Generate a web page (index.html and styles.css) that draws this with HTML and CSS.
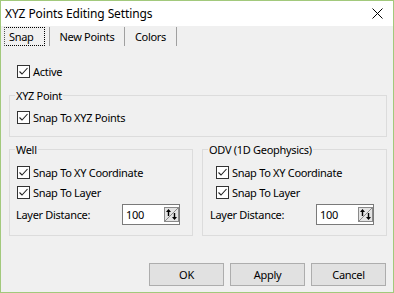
FILE: index.html
```html
<!DOCTYPE html>
<html lang="en">
<head>
    <meta charset="UTF-8">
    <title>XYZ Points Editing Settings</title>
    <link rel="stylesheet" href="styles.css">
</head>
<body>

<div class="window">
    <div class="titlebar">
        <span class="title">XYZ Points Editing Settings</span>
        <svg class="close" width="11" height="11" viewBox="0 0 11 11">
            <path d="M0.5 0.5 L10.5 10.5 M10.5 0.5 L0.5 10.5" stroke="#000" stroke-width="1" fill="none"/>
        </svg>
    </div>

    <div class="tabs">
        <div class="tab tab-snap"><span class="focus">Snap</span></div>
        <div class="tab tab-new">New Points</div>
        <div class="tab tab-colors">Colors</div>
    </div>

    <div class="panel">
        <label class="check active-row">
            <svg class="box" width="13" height="13" viewBox="0 0 13 13"><rect x="0.5" y="0.5" width="12" height="12" fill="#fff" stroke="#333"/><path d="M2.5 6.5 L5 9 L10.5 3" stroke="#222" stroke-width="1.1" fill="none"/></svg>
            Active
        </label>

        <fieldset class="group xyz">
            <legend>XYZ Point</legend>
            <label class="check">
                <svg class="box" width="13" height="13" viewBox="0 0 13 13"><rect x="0.5" y="0.5" width="12" height="12" fill="#fff" stroke="#333"/><path d="M2.5 6.5 L5 9 L10.5 3" stroke="#222" stroke-width="1.1" fill="none"/></svg>
                Snap To XYZ Points
            </label>
        </fieldset>

        <div class="group-row">
            <fieldset class="group well">
                <legend>Well</legend>
                <label class="check">
                    <svg class="box" width="13" height="13" viewBox="0 0 13 13"><rect x="0.5" y="0.5" width="12" height="12" fill="#fff" stroke="#333"/><path d="M2.5 6.5 L5 9 L10.5 3" stroke="#222" stroke-width="1.1" fill="none"/></svg>
                    Snap To XY Coordinate
                </label>
                <label class="check second">
                    <svg class="box" width="13" height="13" viewBox="0 0 13 13"><rect x="0.5" y="0.5" width="12" height="12" fill="#fff" stroke="#333"/><path d="M2.5 6.5 L5 9 L10.5 3" stroke="#222" stroke-width="1.1" fill="none"/></svg>
                    Snap To Layer
                </label>
                <div class="distance">
                    <span class="distance-label">Layer Distance:</span>
                    <div class="spin-input">
                        <span class="value">100</span>
                        <svg class="spin" width="15" height="15" viewBox="0 0 15 15">
                            <rect x="0.5" y="0.5" width="14" height="14" fill="#e3e3e3" stroke="#8a8a8a"/>
                            <path d="M1 14 L14 1" stroke="#8a8a8a" stroke-width="1"/>
                            <path d="M4.5 9 V3" stroke="#000" stroke-width="1.4"/>
                            <path d="M2 5 L4.5 2 L7 5 Z" fill="#000"/>
                            <path d="M10.5 6 V12" stroke="#000" stroke-width="1.4"/>
                            <path d="M8 10 L10.5 13 L13 10 Z" fill="#000"/>
                        </svg>
                    </div>
                </div>
            </fieldset>

            <fieldset class="group odv">
                <legend>ODV (1D Geophysics)</legend>
                <label class="check">
                    <svg class="box" width="13" height="13" viewBox="0 0 13 13"><rect x="0.5" y="0.5" width="12" height="12" fill="#fff" stroke="#333"/><path d="M2.5 6.5 L5 9 L10.5 3" stroke="#222" stroke-width="1.1" fill="none"/></svg>
                    Snap To XY Coordinate
                </label>
                <label class="check second">
                    <svg class="box" width="13" height="13" viewBox="0 0 13 13"><rect x="0.5" y="0.5" width="12" height="12" fill="#fff" stroke="#333"/><path d="M2.5 6.5 L5 9 L10.5 3" stroke="#222" stroke-width="1.1" fill="none"/></svg>
                    Snap To Layer
                </label>
                <div class="distance">
                    <span class="distance-label">Layer Distance:</span>
                    <div class="spin-input">
                        <span class="value">100</span>
                        <svg class="spin" width="15" height="15" viewBox="0 0 15 15">
                            <rect x="0.5" y="0.5" width="14" height="14" fill="#e3e3e3" stroke="#8a8a8a"/>
                            <path d="M1 14 L14 1" stroke="#8a8a8a" stroke-width="1"/>
                            <path d="M4.5 9 V3" stroke="#000" stroke-width="1.4"/>
                            <path d="M2 5 L4.5 2 L7 5 Z" fill="#000"/>
                            <path d="M10.5 6 V12" stroke="#000" stroke-width="1.4"/>
                            <path d="M8 10 L10.5 13 L13 10 Z" fill="#000"/>
                        </svg>
                    </div>
                </div>
            </fieldset>
        </div>
    </div>

    <div class="buttons">
        <button class="btn">OK</button>
        <button class="btn">Apply</button>
        <button class="btn">Cancel</button>
    </div>
</div>

</body>
</html>
```

FILE: styles.css
```css
body {
    margin: 0;
    background-color: #fff;
    font-family: "Noto Sans", Arial, sans-serif;
    font-size: 11px;
    letter-spacing: -0.3px;
    color: #000;
}
.window {
    width: 394px;
    height: 293px;
    box-sizing: border-box;
    border: 1px solid #a2c97c;
    background-color: #f0f0f0;
    display: flex;
    flex-direction: column;
}
.titlebar {
    height: 25px;
    flex: none;
    background-color: #fff;
    display: flex;
    align-items: center;
    justify-content: space-between;
    padding: 0 10px 0 4px;
}
.title {
    font-size: 12px;
    letter-spacing: -0.1px;
}
.close {
    display: block;
}
.tabs {
    display: flex;
    height: 20px;
    flex: none;
    padding-left: 2px;
}
.tab {
    height: 19px;
    margin-top: 1px;
    box-sizing: border-box;
    border-right: 1px solid #a0a0a0;
    display: flex;
    align-items: center;
    justify-content: center;
}
.tab-snap {
    width: 47px;
    justify-content: flex-start;
}
.tab-new {
    width: 75px;
}
.tab-colors {
    width: 52px;
}
.focus {
    width: 41px;
    height: 19px;
    margin-left: 1px;
    box-sizing: border-box;
    border: 1px dotted #000;
    border-left-color: #555;
    display: flex;
    align-items: center;
    padding-left: 4px;
}
.panel {
    flex: 1;
    padding: 18px 6px 0 8px;
}
.check {
    display: flex;
    align-items: center;
    height: 15px;
    line-height: 15px;
    gap: 3px;
}
.active-row {
    padding-left: 8px;
}
.group {
    margin: 0;
    padding: 0 0 0 5px;
    border: 1px solid #dcdcdc;
    min-width: 0;
}
.group legend {
    padding: 0 1px;
    line-height: 15px;
}
.xyz {
    margin-top: 9px;
    padding-bottom: 11px;
}
.xyz .check {
    margin-top: 7px;
    padding-left: 2px;
}
.group-row {
    display: grid;
    grid-template-columns: 184px 185px;
    column-gap: 9px;
    margin-top: 5px;
}
.well, .odv {
    padding-bottom: 10px;
}
.well .check, .odv .check {
    margin-top: 8px;
    padding-left: 2px;
}
.odv .check {
    padding-left: 8px;
}
.group .second {
    margin-top: 5px;
}
.distance {
    display: flex;
    align-items: center;
    margin-top: 4px;
    padding-left: 1px;
}
.odv .distance {
    padding-left: 2px;
}
.distance-label {
    width: 106px;
}
.spin-input {
    width: 58px;
    height: 21px;
    box-sizing: border-box;
    border: 1px solid #7a7a7a;
    background-color: #fff;
    display: flex;
    align-items: center;
    justify-content: space-between;
    padding: 0 0 0 3px;
}
.spin {
    display: block;
    margin-right: 0;
}
.buttons {
    display: flex;
    justify-content: flex-end;
    gap: 6px;
    padding: 0 7px 6px 0;
}
.btn {
    width: 75px;
    height: 23px;
    background-color: #e1e1e1;
    border: 1px solid #adadad;
    font-family: "Noto Sans", Arial, sans-serif;
    font-size: 11px;
    letter-spacing: -0.3px;
    color: #000;
    padding: 0;
}
```
